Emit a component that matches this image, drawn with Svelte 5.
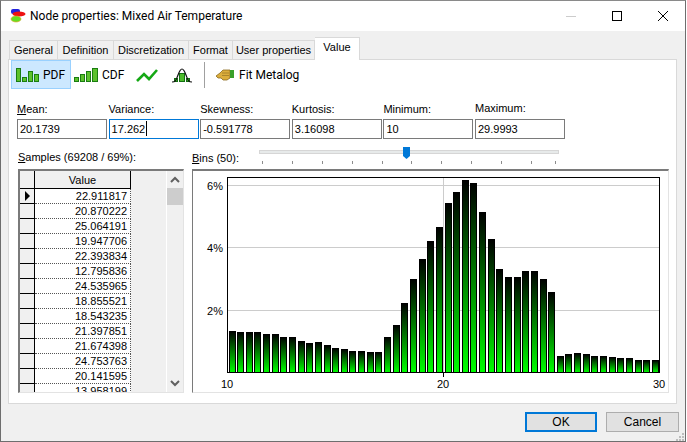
<script>
	const tabs = [
		{ label: "General", w: 49 },
		{ label: "Definition", w: 56 },
		{ label: "Discretization", w: 75 },
		{ label: "Format", w: 44 },
		{ label: "User properties", w: 82 },
		{ label: "Value", w: 45, active: true }
	];

	const samples = [
		"22.911817", "20.870222", "25.064191", "19.947706", "22.393834",
		"12.795836", "24.535965", "18.855521", "18.543235", "21.397851",
		"21.674398", "24.753763", "20.141595", "13.958199"
	];

	// bar tops, y position inside the chart (px from window top)
	const tops = [
		331, 332, 332, 332, 334, 334, 337, 337, 341, 343,
		342, 345, 348, 349, 351, 351, 352, 352, 337, 325,
		303, 279, 259, 241, 227, 203, 192, 180, 183, 212,
		239, 269, 277, 277, 271, 271, 279, 292, 356, 354,
		353, 354, 356, 356, 357, 358, 358, 360, 360, 360
	];

	const bars = tops.map((top, i) => ({ x: Math.floor(229 + i * 8.64), top }));
	const ticks = [3, 33, 63, 93, 123, 152, 182, 212, 242, 272, 296];
	const grid = [185, 247, 310];
</script>

<div class="window">
	<div class="titlebar">
		<svg class="appicon" width="16" height="16" viewBox="0 0 16 16">
			<rect x="1" y="1" width="9" height="5" rx="2" fill="#2222dd" />
			<ellipse cx="9" cy="6" rx="6.5" ry="2.6" fill="#ee1111" />
			<ellipse cx="6" cy="11" rx="5" ry="3" fill="#66dd22" stroke="#e0a020" stroke-width="0.6" />
		</svg>
		<span class="title">Node properties: Mixed Air Temperature</span>
		<div class="winbtns">
			<div class="winbtn">
				<svg width="12" height="12" viewBox="0 0 12 12"><path d="M1 6.500h10" stroke="#cccccc" /></svg>
			</div>
			<div class="winbtn">
				<svg width="12" height="12" viewBox="0 0 12 12"><rect x="1.500" y="1.500" width="9" height="9" fill="none" stroke="#000" /></svg>
			</div>
			<div class="winbtn">
				<svg width="12" height="12" viewBox="0 0 12 12"><path d="M1 1l10 10M11 1L1 11" stroke="#000" /></svg>
			</div>
		</div>
	</div>

	<div class="tabs">
		{#each tabs as tab}
			<div class="tab" class:active={tab.active} style="width: {tab.w}px">{tab.label}</div>
		{/each}
	</div>

	<div class="panel">
		<div class="toolbar">
			<button class="tool selected">
				<svg width="24" height="16" viewBox="0 0 24 16">
					<g fill="#5cc22c" stroke="#1a7d12">
						<rect x="1.500" y="1.500" width="4" height="13" />
						<rect x="7.500" y="10.500" width="4" height="4" />
						<rect x="13.500" y="4.500" width="4" height="10" />
						<rect x="19.500" y="7.500" width="4" height="7" />
					</g>
				</svg>
				<span>PDF</span>
			</button>
			<button class="tool cdf">
				<svg width="24" height="16" viewBox="0 0 24 16">
					<g fill="#5cc22c" stroke="#1a7d12">
						<rect x="0.500" y="10.500" width="4" height="4" />
						<rect x="6.500" y="7.500" width="4" height="7" />
						<rect x="12.500" y="4.500" width="4" height="10" />
						<rect x="18.500" y="1.500" width="5" height="13" />
					</g>
				</svg>
				<span>CDF</span>
			</button>
			<button class="tool icononly">
				<svg width="22" height="16" viewBox="0 0 22 16">
					<path d="M1 14L8 7l5 5 8-9" fill="none" stroke="#15a815" stroke-width="2.600" />
				</svg>
			</button>
			<button class="tool icononly">
				<svg width="22" height="16" viewBox="0 0 22 16">
					<g fill="#4cbc2a" stroke="#127012">
						<rect x="8.500" y="6.500" width="5" height="8" />
						<rect x="3.500" y="11.500" width="3" height="3" />
						<rect x="15.500" y="11.500" width="3" height="3" />
					</g>
					<path d="M1 15c4 0 4-2 6-7 1.500-4 2.500-6 4-6s2.500 2 4 6c2 5 2 7 6 7" fill="none" stroke="#111" stroke-width="1.200" />
				</svg>
			</button>
			<div class="sep"></div>
			<button class="tool fit">
				<svg width="20" height="14" viewBox="0 0 20 14">
					<path d="M1 8l4-3 3-3h7v8l-3 2H8L6 10 3 10z" fill="#dcae3c" stroke="#8a6a20" stroke-width="0.800" />
					<path d="M7 5h7M7 7.500h7" stroke="#8a6a20" stroke-width="0.600" />
					<rect x="15" y="2" width="4" height="8" fill="#3aa02a" />
				</svg>
				<span>Fit Metalog</span>
			</button>
		</div>

		<div class="fields">
			<div class="field">
				<div class="label"><u>M</u>ean:</div>
				<div class="input">20.1739</div>
			</div>
			<div class="field">
				<div class="label">Variance:</div>
				<div class="input focus">17.262<span class="caret"></span></div>
			</div>
			<div class="field">
				<div class="label">Skewness:</div>
				<div class="input">-0.591778</div>
			</div>
			<div class="field">
				<div class="label">Kurtosis:</div>
				<div class="input">3.16098</div>
			</div>
			<div class="field">
				<div class="label">Minimum:</div>
				<div class="input">10</div>
			</div>
			<div class="field">
				<div class="label raised">Maximum:</div>
				<div class="input">29.9993</div>
			</div>
		</div>

		<div class="lower">
			<div class="samples">
				<div class="samples-label"><u>S</u>amples (69208 / 69%):</div>
				<div class="gridbox">
					<div class="table">
						<div class="row head">
							<div class="rowhead"></div>
							<div class="cell">Value</div>
						</div>
						{#each samples as value, i}
							<div class="row">
								<div class="rowhead">
									{#if i === 0}<span class="pointer"></span>{/if}
								</div>
								<div class="cell">{value}</div>
							</div>
						{/each}
					</div>
					<div class="scrollbar">
						<svg width="16" height="17" viewBox="0 0 16 17"><path d="M4 11l4-4 4 4" fill="none" stroke="#606060" stroke-width="2" /></svg>
						<div class="thumb"></div>
						<div class="track"></div>
						<svg width="16" height="17" viewBox="0 0 16 17"><path d="M4 6l4 4 4-4" fill="none" stroke="#606060" stroke-width="2" /></svg>
					</div>
				</div>
			</div>

			<div class="bins">
				<div class="bins-head">
					<div class="bins-label"><u>B</u>ins (50):</div>
					<svg class="slider" width="300" height="22" viewBox="0 0 300 22">
						<rect x="0.500" y="3.500" width="299" height="3" fill="#e7eaea" stroke="#d6d6d6" />
						{#each ticks as t}
							<path d="M{t + 0.5} 14v3" stroke="#8c8c8c" />
						{/each}
						<path d="M144 0h7v9l-3.500 3-3.500-3z" fill="#0078d7" />
					</svg>
				</div>
				<div class="chartbox">
					<svg class="chart" width="475" height="222" viewBox="193 171 475 222">
						<defs>
							<linearGradient id="barfill" x1="0" y1="0" x2="0" y2="1">
								<stop offset="0" stop-color="#000" />
								<stop offset="1" stop-color="#00ff00" />
							</linearGradient>
						</defs>
						{#each grid as y}
							<path d="M227 {y + 0.5}H659" stroke="#cccccc" />
						{/each}
						<path d="M443.500 177V372" stroke="#cccccc" />
						<g shape-rendering="crispEdges">
							{#each bars as b}
								<rect x={b.x + 0.5} y={b.top + 0.5} width="6" height={372 - b.top} fill="url(#barfill)" stroke="#000" />
							{/each}
						</g>
						<rect x="227.500" y="177.500" width="432" height="195" fill="none" stroke="#000" />
						<path d="M443.500 373v4" stroke="#000" />
						<g class="axis" text-anchor="end">
							<text x="223" y="190">6%</text>
							<text x="223" y="252">4%</text>
							<text x="223" y="315">2%</text>
						</g>
						<g class="axis" text-anchor="middle">
							<text x="227" y="388">10</text>
							<text x="443" y="388">20</text>
							<text x="659" y="388">30</text>
						</g>
					</svg>
				</div>
			</div>
		</div>
	</div>

	<div class="footer">
		<button class="btn default">OK</button>
		<button class="btn">Cancel</button>
		<svg class="grip" width="9" height="8" viewBox="0 0 9 8">
			<g fill="#bdbdbd">
				<rect x="6" y="0" width="2" height="2" />
				<rect x="3" y="3" width="2" height="2" />
				<rect x="6" y="3" width="2" height="2" />
				<rect x="0" y="6" width="2" height="2" />
				<rect x="3" y="6" width="2" height="2" />
				<rect x="6" y="6" width="2" height="2" />
			</g>
		</svg>
	</div>
</div>

<style>
	:global(body) {
		background: #fff;
	}

	.window {
		position: relative;
		box-sizing: border-box;
		width: 686px;
		height: 442px;
		background: #f0f0f0;
		border: 1px solid #6e6e6e;
		border-top-color: #8a8a8a;
		font-family: "Liberation Sans", Arial, sans-serif;
		font-size: 11px;
		color: #000;
		overflow: hidden;
	}

	.titlebar {
		display: flex;
		align-items: center;
		height: 30px;
		padding-bottom: 1px;
		box-sizing: border-box;
		background: #fff;
	}

	.appicon {
		margin-left: 9px;
	}

	.title {
		margin-left: 4px;
		font-family: Roboto, sans-serif;
		font-size: 12px;
	}

	.winbtns {
		display: flex;
		margin-left: auto;
		margin-right: -1px;
	}

	.winbtn {
		display: flex;
		align-items: center;
		justify-content: center;
		width: 46px;
		height: 29px;
	}

	.tabs {
		display: flex;
		align-items: flex-end;
		height: 22px;
		margin: 6px 0 0 8px;
	}

	.tab {
		box-sizing: border-box;
		height: 19px;
		background: #f0f0f0;
		border: 1px solid #d9d9d9;
		border-bottom: none;
		border-left: none;
		text-align: center;
		line-height: 19px;
		white-space: nowrap;
	}

	.tab:first-child {
		border-left: 1px solid #d9d9d9;
	}

	.tab.active {
		position: relative;
		height: 23px;
		margin-bottom: -1px;
		background: #fff;
		line-height: 19px;
	}

	.panel {
		box-sizing: border-box;
		width: 669px;
		height: 345px;
		margin-left: 7px;
		background: #fff;
		border: 1px solid #d9d9d9;
	}

	.toolbar {
		display: flex;
		align-items: center;
		height: 29px;
		padding-left: 2px;
		font-family: Roboto, sans-serif;
		font-size: 12px;
	}

	.tool {
		display: flex;
		align-items: center;
		gap: 4px;
		box-sizing: border-box;
		width: 60px;
		height: 29px;
		padding: 0 3px;
		background: none;
		border: 1px solid transparent;
		font: inherit;
		color: #000;
	}

	.tool.selected {
		background: #cce8ff;
		border-color: #99d1ff;
	}

	.tool.cdf {
		width: 58px;
		padding: 0 0 0 2px;
	}

	.tool.icononly {
		width: 35px;
		justify-content: center;
		padding: 0;
	}

	.sep {
		width: 1px;
		height: 26px;
		margin: 0 8px 0 5px;
		background: #a0a0a0;
	}

	.tool.fit {
		width: 92px;
		padding: 0 0 0 1px;
	}

	.fields {
		display: flex;
		gap: 1.6px;
		margin: 13px 0 0 8px;
	}

	.field {
		width: 90px;
	}

	.label {
		height: 17px;
		line-height: 14px;
		white-space: nowrap;
	}

	.label.raised {
		margin-top: -1px;
		height: 18px;
	}

	.input {
		box-sizing: border-box;
		height: 20px;
		padding-left: 2px;
		border: 1px solid #7a7a7a;
		line-height: 18px;
		background: #fff;
	}

	.input.focus {
		border-color: #0078d7;
	}

	.caret {
		display: inline-block;
		width: 1px;
		height: 15px;
		margin-left: 1px;
		background: #000;
		vertical-align: -3px;
	}

	.lower {
		display: flex;
		gap: 8px;
		margin: 8px 0 0 9px;
	}

	.samples {
		width: 166px;
	}

	.samples-label {
		height: 22px;
		padding-top: 3px;
		box-sizing: border-box;
		line-height: 14px;
		white-space: nowrap;
	}

	.gridbox {
		display: flex;
		box-sizing: border-box;
		height: 224px;
		background: #f0f0f0;
		border-top: 2px solid #7a7a7a;
		border-left: 2px solid #7a7a7a;
		border-bottom: 1px solid #e3e3e3;
		border-right: 1px solid #e3e3e3;
		overflow: hidden;
	}

	.table {
		width: 147px;
		border-right: 1px solid #fff;
		box-sizing: border-box;
	}

	.row {
		display: flex;
		height: 15px;
	}

	.row.head {
		height: 18px;
	}

	.rowhead {
		display: flex;
		align-items: center;
		justify-content: center;
		box-sizing: border-box;
		flex: none;
		width: 15px;
		background: #f0f0f0;
		border-right: 1px solid #000;
		border-bottom: 1px solid #000;
	}

	.cell {
		box-sizing: border-box;
		flex: none;
		width: 96px;
		padding-right: 3px;
		background: #fff;
		border-right: 1px dotted #555;
		border-bottom: 1px dotted #555;
		text-align: right;
		line-height: 15px;
	}

	.head .cell {
		padding: 0;
		background: #f0f0f0;
		border-right: 1px solid #000;
		border-bottom: 1px solid #000;
		text-align: center;
		line-height: 18px;
	}

	.pointer {
		width: 0;
		height: 0;
		border-top: 5px solid transparent;
		border-bottom: 5px solid transparent;
		border-left: 5px solid #000;
	}

	.scrollbar {
		display: flex;
		flex-direction: column;
		width: 16px;
	}

	.thumb {
		height: 17px;
		background: #cdcdcd;
	}

	.track {
		flex: 1;
	}

	.bins-head {
		display: flex;
		height: 22px;
	}

	.bins-label {
		width: 67px;
		padding-top: 4px;
		line-height: 14px;
	}

	.chartbox {
		box-sizing: border-box;
		width: 477px;
		height: 224px;
		background: #fff;
		border-top: 2px solid #7a7a7a;
		border-left: 1px solid #7a7a7a;
		border-bottom: 1px solid #e3e3e3;
		border-right: 1px solid #e3e3e3;
	}

	.chart {
		display: block;
	}

	.axis text {
		font-size: 11px;
		fill: #000;
	}

	.footer {
		display: flex;
		justify-content: flex-end;
		gap: 9px;
		margin-top: 8px;
		padding-right: 6px;
	}

	.btn {
		box-sizing: border-box;
		width: 73px;
		height: 20px;
		padding: 0;
		background: #e1e1e1;
		border: 1px solid #adadad;
		font: inherit;
		font-size: 12px;
		color: #000;
	}

	.btn.default {
		width: 72px;
		border: 2px solid #0078d7;
	}

	.grip {
		position: absolute;
		right: 0;
		bottom: 0;
	}
</style>
